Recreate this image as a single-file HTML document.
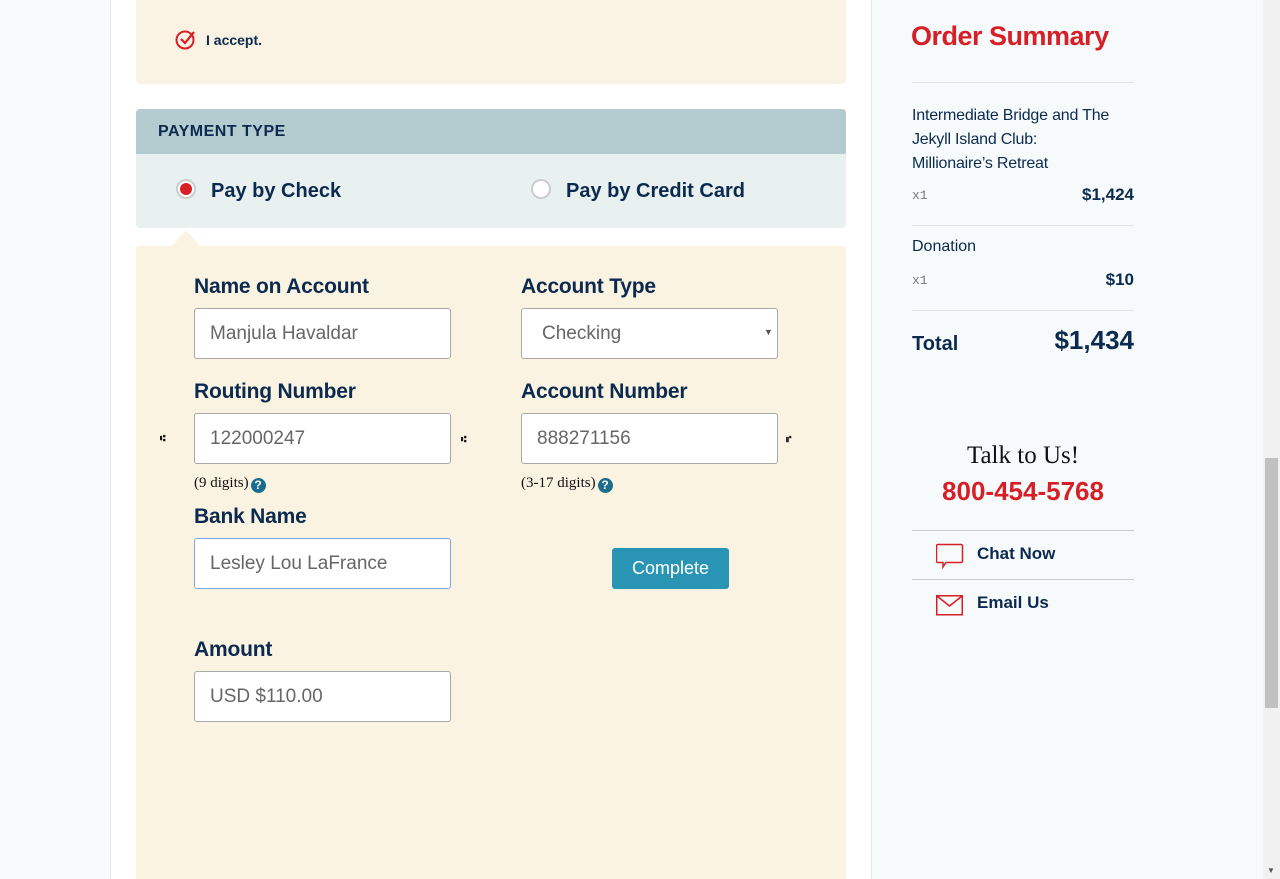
<!DOCTYPE html>
<html><head><style>
*{margin:0;padding:0;box-sizing:border-box}
html,body{width:1280px;height:879px;overflow:hidden}
body{background:#f6fafb;font-family:"Liberation Sans",sans-serif;position:relative;color:#0c2a4f}
.a{position:absolute}
.main{left:110px;top:0;width:762px;height:879px;background:#fff;border-left:1px solid #e3e8ea;border-right:1px solid #e3e8ea}
.lbl{font-size:21px;font-weight:bold;color:#0c2a4f;letter-spacing:-.2px}
.inp{width:257px;height:51px;background:#fff;border:1px solid #a9a9a9;border-radius:3px;font-size:19px;color:#666;padding:14px 15px 0}
.hint{font-family:"Liberation Serif",serif;font-size:15px;color:#111}
.q{display:inline-block;width:15px;height:15px;border-radius:50%;background:#1b6d8c;color:#fff;font:bold 12px/15px "Liberation Sans";text-align:center;vertical-align:-2px;margin-left:2px}
.side{font-size:16px;color:#0c2a4f}
.hr{height:1px;background:#dde3e6;width:222px;left:912px}
.mono{font-family:"Liberation Mono",monospace;font-size:13px;color:#777}
.price{font-weight:bold;font-size:17px;right:146px}
.mk{font-size:9px;font-weight:bold;color:#111}
</style></head><body>
<div class="a main"></div>
<div class="a" style="left:136px;top:0;width:710px;height:84px;background:#faf2e3;border-radius:0 0 4px 4px"></div>
<svg class="a" style="left:175px;top:29px" width="22" height="22" viewBox="0 0 22 22"><circle cx="10" cy="11" r="8.5" fill="none" stroke="#d61f26" stroke-width="2"/><path d="M6 10l4 4 9-11" fill="none" stroke="#d61f26" stroke-width="2.2"/></svg>
<div class="a" style="left:206px;top:32px;font-size:14px;font-weight:bold;color:#0c2a4f">I accept.</div>

<div class="a" style="left:136px;top:109px;width:710px;height:45px;background:#b4cbd0;border-radius:4px 4px 0 0"></div>
<div class="a" style="left:158px;top:123px;font-size:16px;font-weight:bold;letter-spacing:.5px">PAYMENT TYPE</div>
<div class="a" style="left:136px;top:154px;width:710px;height:74px;background:#e8f0f0;border-radius:0 0 4px 4px"></div>
<div class="a" style="left:176px;top:179px;width:20px;height:20px;border-radius:50%;background:#fff;border:2px solid #ccc"></div>
<div class="a" style="left:180px;top:183px;width:12px;height:12px;border-radius:50%;background:#d61f26"></div>
<div class="a" style="left:211px;top:180px;font-size:20px;font-weight:bold">Pay by Check</div>
<div class="a" style="left:531px;top:179px;width:20px;height:20px;border-radius:50%;background:#fff;border:2px solid #ccc"></div>
<div class="a" style="left:566px;top:180px;font-size:20px;font-weight:bold">Pay by Credit Card</div>

<div class="a" style="left:136px;top:246px;width:710px;height:633px;background:#fbf3e2;border-radius:4px 4px 0 0"></div>
<div class="a" style="left:172px;top:230px;width:0;height:0;border-left:14px solid transparent;border-right:14px solid transparent;border-bottom:16px solid #fbf3e2"></div>

<div class="a lbl" style="left:194px;top:275px">Name on Account</div>
<div class="a inp" style="left:194px;top:308px">Manjula Havaldar</div>
<div class="a lbl" style="left:521px;top:275px">Account Type</div>
<div class="a inp" style="left:521px;top:308px;padding-left:20px">Checking</div>
<div class="a" style="left:764px;top:327px;font-size:9px;color:#555">▼</div>

<div class="a lbl" style="left:194px;top:380px">Routing Number</div>
<div class="a inp" style="left:194px;top:413px">122000247</div>
<div class="a lbl" style="left:521px;top:380px">Account Number</div>
<div class="a inp" style="left:521px;top:413px">888271156</div>
<div class="a mk" style="left:160px;top:433px">⑆</div>
<div class="a mk" style="left:461px;top:434px">⑆</div>
<div class="a mk" style="left:786px;top:434px">⑈</div>
<div class="a hint" style="left:194px;top:475px">(9 digits)<span class="q">?</span></div>
<div class="a hint" style="left:521px;top:475px">(3-17 digits)<span class="q">?</span></div>

<div class="a lbl" style="left:194px;top:505px">Bank Name</div>
<div class="a inp" style="left:194px;top:538px;border-color:#7ea6e0">Lesley Lou LaFrance</div>
<div class="a" style="left:612px;top:548px;width:117px;height:41px;background:#2a94b5;border-radius:3px;color:#fff;font-size:18px;text-align:center;line-height:41px">Complete</div>

<div class="a lbl" style="left:194px;top:638px">Amount</div>
<div class="a inp" style="left:194px;top:671px">USD $110.00</div>

<!-- sidebar -->
<div class="a" style="left:911px;top:21px;font-size:27px;font-weight:bold;color:#d61f26;letter-spacing:-.5px">Order Summary</div>
<div class="a hr" style="top:82px"></div>
<div class="a side" style="left:912px;top:104px;line-height:24px;width:240px;font-size:16px;letter-spacing:-.2px">Intermediate Bridge and The<br>Jekyll Island Club:<br>Millionaire’s Retreat</div>
<div class="a mono" style="left:912px;top:188px">x1</div>
<div class="a side price" style="top:185px">$1,424</div>
<div class="a hr" style="top:225px"></div>
<div class="a side" style="left:912px;top:238px">Donation</div>
<div class="a mono" style="left:912px;top:273px">x1</div>
<div class="a side price" style="top:270px">$10</div>
<div class="a hr" style="top:310px"></div>
<div class="a side" style="left:912px;top:333px;font-size:20px;font-weight:bold">Total</div>
<div class="a side" style="right:146px;top:325px;font-size:26px;font-weight:bold">$1,434</div>

<div class="a" style="left:912px;top:442px;width:222px;text-align:center;font-family:'Liberation Serif',serif;font-size:25px;color:#111">Talk to Us!</div>
<div class="a" style="left:912px;top:476px;width:222px;text-align:center;font-size:26px;font-weight:bold;color:#d61f26">800-454-5768</div>
<div class="a hr" style="top:530px;background:#ccc"></div>
<svg class="a" style="left:936px;top:543px" width="28" height="28" viewBox="0 0 28 28"><path d="M2 1.5h23a1.5 1.5 0 0 1 1.5 1.5v15a1.5 1.5 0 0 1-1.5 1.5H10l-3 4.5v-4.5H2A1.5 1.5 0 0 1 .5 18V3A1.5 1.5 0 0 1 2 1.5z" fill="none" stroke="#d61f26" stroke-width="1.5"/></svg>
<div class="a side" style="left:977px;top:544px;font-size:17px;font-weight:bold">Chat Now</div>
<div class="a hr" style="top:579px;background:#ccc"></div>
<svg class="a" style="left:936px;top:595px" width="28" height="22" viewBox="0 0 28 22"><rect x=".75" y=".75" width="25.5" height="19" fill="none" stroke="#d61f26" stroke-width="1.5"/><path d="M1 1l12.5 10L26 1" fill="none" stroke="#d61f26" stroke-width="1.5"/></svg>
<div class="a side" style="left:977px;top:593px;font-size:17px;font-weight:bold">Email Us</div>

<div class="a" style="left:1263px;top:0;width:17px;height:879px;background:#f1f1f1"></div>
<div class="a" style="left:1265px;top:458px;width:13px;height:250px;background:#c1c1c1"></div>
<div class="a" style="left:1267px;top:866px;font-size:8px;color:#555">▼</div>
</body></html>
